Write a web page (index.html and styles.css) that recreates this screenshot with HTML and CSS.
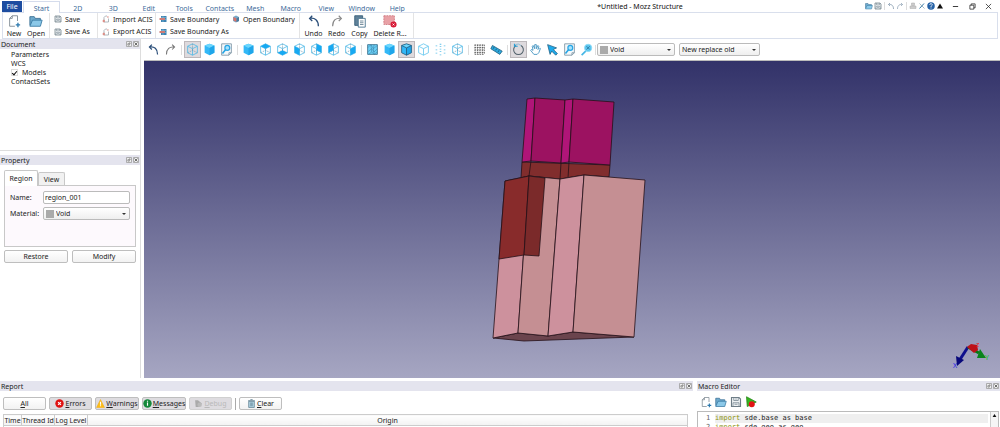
FILE: index.html
```html
<!DOCTYPE html>
<html lang="en">
<head>
<meta charset="utf-8">
<title>*Untitled - Mozz Structure</title>
<link rel="stylesheet" href="styles.css">
</head>
<body>
<svg class="defs" aria-hidden="true">
  <defs>
    <symbol id="undo" viewBox="0 0 16 16"><path d="M6 2 3 5l3 3M3 5c6-1 10 2 10 9" fill="none" stroke="currentColor" stroke-width="1.5"/></symbol>
    <symbol id="redo" viewBox="0 0 16 16"><path d="m10 2 3 3-3 3M13 5C7 4 3 7 3 14" fill="none" stroke="currentColor" stroke-width="1.3"/></symbol>
    <symbol id="cube" viewBox="0 0 16 16"><path d="m8 1 6 2v9l-6 3-6-3V3z" fill="#33b8f7"/><path d="m8 1 6 2-6 3-6-3z" fill="#6bd6fd"/><path d="m8 6 6-3v9l-6 3z" fill="#1fa6ea"/></symbol>
    <symbol id="cube-edges" viewBox="0 0 16 16"><use href="#cube"/><path d="m8 1 6 2v9l-6 3-6-3V3zM2 3l6 3 6-3M8 6v9" fill="none" stroke="#245a7c"/></symbol>
    <symbol id="frame" viewBox="0 0 16 16"><path d="m8 1 6 3v8l-6 3-6-3V4zM2 4l6 3 6-3M8 7v8" fill="none" stroke="#50b9e6"/><path d="M8 1v8M2 12l6-3 6 3" fill="none" stroke="#6b98ae" stroke-width=".8" stroke-dasharray="2 1"/></symbol>
    <symbol id="hollow" viewBox="0 0 16 16"><path d="m8 1 6 3v8l-6 3-6-3V4zM2 4l6 3 6-3M8 7v8" fill="none" stroke="#63c5ee"/></symbol>
    <symbol id="face-top" viewBox="0 0 16 16"><use href="#frame"/><path d="m8 1 6 3-6 3-6-3z" fill="#17a9f2"/></symbol>
    <symbol id="face-bottom" viewBox="0 0 16 16"><use href="#frame"/><path d="m8 9 6 3-6 3-6-3z" fill="#17a9f2"/></symbol>
    <symbol id="face-left" viewBox="0 0 16 16"><use href="#frame"/><path d="m2 4 6 3v8l-6-3z" fill="#17a9f2"/></symbol>
    <symbol id="face-right" viewBox="0 0 16 16"><use href="#frame"/><path d="m8 7 6-3v8l-6 3z" fill="#17a9f2"/></symbol>
    <symbol id="face-back" viewBox="0 0 16 16"><use href="#frame"/><path d="m8 1 6 3v8L8 9z" fill="#17a9f2"/></symbol>
    <symbol id="face-rear" viewBox="0 0 16 16"><use href="#frame"/><path d="m8 1-6 3v8l6-3z" fill="#17a9f2"/></symbol>
    <symbol id="points" viewBox="0 0 16 16"><path d="M2 3h2v1H2zm5-2h2v1H7zm5 2h2v1h-2zM2 8h2v1H2zm5-1h2v1H7zm5 1h2v1h-2zM2 12h2v1H2zm5 2h2v1H7zm5-2h2v1h-2zM7 10h2v1H7zM7 4h2v1H7z" fill="#58bfe9"/></symbol>
    <symbol id="page-zoom" viewBox="0 0 16 16"><path d="M2 1h12v11l-3 3H2z" fill="#f4f8fa" stroke="#7890a0"/><path d="M14 12h-3v3" fill="none" stroke="#7890a0"/><circle cx="9" cy="6" r="3" fill="#a6e2fb" stroke="#26a5e5" stroke-width="1.5"/><path d="m7 8-4 5" stroke="#26a5e5" stroke-width="2"/></symbol>
    <symbol id="zoom-fit" viewBox="0 0 16 16"><circle cx="10" cy="6" r="4.5" fill="#5ac5ee" stroke="#8edbf7"/><path d="m8 4 4 4m0-4L8 8" stroke="#28749b"/><path d="m7 10-5 5" stroke="#45b6e5" stroke-width="2"/></symbol>
    <symbol id="mesh" viewBox="0 0 16 16"><path d="M2 2h12v12H2z" fill="#6bd0f7" stroke="#386b88"/><path d="m2 6 4-4 3 5 5-4M2 11l5-4 3 4 4-4M3 14l4-3 3 3 4-3M6 2l1 9m3-9-1 5 1 7" fill="none" stroke="#397a9d" stroke-width=".6"/></symbol>
    <symbol id="grid" viewBox="0 0 16 16"><path d="M2 2.500h12M2 5.500h12M2 8.500h12M2 11.500h12M2 14h12M2.500 2v12M5.500 2v12M8.500 2v12M11.500 2v12M14 2v12" stroke="#555" stroke-width="1" stroke-dasharray="2 1"/></symbol>
    <symbol id="ruler" viewBox="0 0 16 16"><path d="m3 3 12 7-3 4L1 7z" fill="#2ba9df" stroke="#246180"/><path d="m5 5-1 2m4 0L7 9m4 0-1 2" stroke="#195371"/></symbol>
    <symbol id="rotate" viewBox="0 0 16 16"><path d="M5 3a6 6 0 1 0 6 0" fill="none" stroke="#54636d" stroke-width="1.3"/><path d="M4 2q4-2 7 1" fill="none" stroke="#7eb9d5"/><path d="M3 1v3h4" fill="none" stroke="#20a1da" stroke-width="1.300"/></symbol>
    <symbol id="hand" viewBox="0 0 16 16"><path d="M6 14 2 9l1-1 2 1-1-5 1-1 2 4V2h2v5l2-4 1 1-1 4 2-2 1 1-2 5-2 2z" fill="#fff" stroke="#348bbb"/></symbol>
    <symbol id="pointer" viewBox="0 0 16 16"><path d="m2 2 11 4-4 2 5 5-2 2-5-5-2 4z" fill="#1daaec" stroke="#266588"/></symbol>
    <symbol id="new" viewBox="0 0 16 16"><path d="M12 8V2H6L3 5v9h6M6 2v3H3" fill="none" stroke="#7b8790"/><path d="M10 12.500h5M12.500 10v5" stroke="#2b79ae" stroke-width="1.500"/></symbol>
    <symbol id="folder" viewBox="0 0 16 16"><path d="M1 13V3h5l1 2h6v3" fill="#6eaacd" stroke="#386e94"/><path d="m1 14 3-7h11l-2 7z" fill="#8bc8e8" stroke="#397aa3"/></symbol>
    <symbol id="disk" viewBox="0 0 16 16"><path d="M2 2h10l2 2v10H2z" fill="#eef2f4" stroke="#6e7d87" stroke-width="1.500"/><path d="M5 2v4h6V2M4 14V9h8v5M6 11h4M8 3v2" fill="none" stroke="#73838e"/></symbol>
    <symbol id="acis" viewBox="0 0 16 16"><path d="M10 2H7L4 5v9h9V7" fill="none" stroke="#87939b" stroke-width="1.300"/><path d="m11 2 2 2-2 2M2 10h3v4H2z" fill="#e5958d" stroke="#d7867e"/></symbol>
    <symbol id="boundary" viewBox="0 0 16 16"><path d="M4 2h11v12H4z" fill="#3d83b2"/><path d="M4 5h11M4 9h11M8 2v12" stroke="#9ac8de"/><path d="M1 6h11v4H1z" fill="#cf7c77"/></symbol>
    <symbol id="open-boundary" viewBox="0 0 16 16"><path d="m8 1 6 3v8l-6 3-6-3V4z" fill="#75a9c9"/><path d="m3 4 6 3v7l-6-3z" fill="#db7168"/><path d="m9 7 5-3v8l-5 2z" fill="#487b9e"/></symbol>
    <symbol id="copy" viewBox="0 0 16 16"><path d="M2 2h9v11H2z" fill="#61829a" stroke="#345b77"/><path d="M6 5h8v10H6z" fill="#fff" stroke="#46718d"/><path d="M8 8h4M8 10h4M8 12h4" stroke="#658091"/></symbol>
    <symbol id="delete" viewBox="0 0 16 16"><path d="M1 2h12v10H1z" fill="#e8a1a6" stroke="#cf777f" stroke-dasharray="2 1"/><circle cx="12" cy="12" r="3.500" fill="#d71935"/><path d="m11 11 2 2m0-2-2 2" stroke="#fff"/></symbol>
    <symbol id="float" viewBox="0 0 8 8"><rect x=".5" y=".5" width="7" height="7" rx="1" fill="#eee" stroke="#888"/><path d="M2.500 5.500v-2h2v2zM4 2.500h1.500V4" fill="none" stroke="#555" stroke-width=".7"/></symbol>
    <symbol id="close" viewBox="0 0 8 8"><rect x=".5" y=".5" width="7" height="7" rx="1" fill="#eee" stroke="#888"/><path d="m2 2 4 4m0-4L2 6" stroke="#444"/></symbol>
    <symbol id="error" viewBox="0 0 16 16"><circle cx="8" cy="8" r="7.500" fill="#df1212"/><path d="m5.500 5.500 5 5m0-5-5 5" stroke="#fff" stroke-width="2"/></symbol>
    <symbol id="warning" viewBox="0 0 16 16"><path d="m8 1 7 14H1z" fill="#fdbd15" stroke="#f3ab13"/><path d="M8 5v5m0 1v2" stroke="#fff" stroke-width="2"/></symbol>
    <symbol id="message" viewBox="0 0 16 16"><circle cx="8" cy="8" r="7.500" fill="#15893b"/><path d="M8 3v2m0 1v6" stroke="#fff" stroke-width="2"/></symbol>
    <symbol id="debug" viewBox="0 0 16 16"><path d="M2 2h5l7 6-6 6H3z" fill="#aaa"/><circle cx="10" cy="10" r="4" fill="#bbb"/></symbol>
    <symbol id="trash" viewBox="0 0 16 16"><path d="M3 4h10v11H3zM2 3h12M6 1h4" fill="#b9dcea" stroke="#57788b" stroke-width="1.300"/><path d="M6 6v7m2-7v7m2-7v7" stroke="#57788b"/></symbol>
    <symbol id="run" viewBox="0 0 16 16"><path d="m2 1 13 7-12 6z" fill="#35b51e" stroke="#238316"/><circle cx="9" cy="11" r="4" fill="#e21414"/></symbol>
    <symbol id="printer" viewBox="0 0 16 16"><path d="M5 2h6v5H5zM2 8h12v5H2z" fill="#ccc" stroke="#aaa"/></symbol>
    <symbol id="tools" viewBox="0 0 16 16"><path d="m3 13 9-10" stroke="#397ca8" stroke-width="2"/><path d="m3 3 10 10" stroke="#8aa2af" stroke-width="1.500"/></symbol>
    <symbol id="help" viewBox="0 0 16 16"><circle cx="8" cy="8" r="7.500" fill="#2561a6"/><path d="M5.500 6c0-4 5-3 5-.5C10.500 7.500 8 7 8 10m0 1v2" fill="none" stroke="#fff" stroke-width="1.700"/></symbol>
    <symbol id="up" viewBox="0 0 16 16"><path d="m8 3 6 10H2z" fill="#111"/></symbol>
    <symbol id="minimize" viewBox="0 0 16 16"><path d="M2 8h12" stroke="#222" stroke-width="2"/></symbol>
    <symbol id="restore" viewBox="0 0 16 16"><path d="M2 5h9v9H2zM5 5V2h9v9h-3" fill="none" stroke="#222" stroke-width="1.700"/></symbol>
    <symbol id="exit" viewBox="0 0 16 16"><path d="m2 2 12 12m0-12L2 14" stroke="#222" stroke-width="1.700"/></symbol>
    <linearGradient id="sky" x1="0" y1="0" x2="0" y2="1"><stop offset="0" stop-color="#323269"/><stop offset="1" stop-color="#a6a6c2"/></linearGradient>
  </defs>
</svg>

<header class="titlebar">
  <nav class="tabs">
    <button class="file">File</button>
    <button class="start">Start</button>
    <div class="tab-list">
      <button>2D</button><button>3D</button><button>Edit</button><button>Tools</button><button>Contacts</button><button>Mesh</button><button>Macro</button><button>View</button><button>Window</button><button>Help</button>
    </div>
  </nav>
  <h1 class="title">*Untitled - Mozz Structure</h1>
  <div class="quick">
    <button aria-label="Open"><svg><use href="#folder"/></svg></button>
    <button aria-label="Save"><svg><use href="#disk"/></svg></button>
    <i></i>
    <button aria-label="Undo" class="faded"><svg><use href="#undo"/></svg></button>
    <button aria-label="Redo" class="faded"><svg><use href="#redo"/></svg></button>
    <i></i>
    <button aria-label="Print"><svg><use href="#printer"/></svg></button>
    <button aria-label="Options"><svg><use href="#tools"/></svg></button>
    <button aria-label="Help"><svg><use href="#help"/></svg></button>
    <button aria-label="Collapse ribbon"><svg><use href="#up"/></svg></button>
    <div class="window-buttons">
      <button aria-label="Minimize"><svg><use href="#minimize"/></svg></button>
      <button aria-label="Restore window"><svg><use href="#restore"/></svg></button>
      <button aria-label="Close window"><svg><use href="#exit"/></svg></button>
    </div>
  </div>
</header>

<section class="ribbon">
  <div class="group large g-file">
    <button><svg><use href="#new"/></svg>New</button>
    <button><svg><use href="#folder"/></svg>Open</button>
  </div>
  <div class="group small g-save">
    <button><svg><use href="#disk"/></svg>Save</button>
    <button><svg><use href="#disk"/></svg>Save As</button>
  </div>
  <div class="group small g-acis">
    <button><svg><use href="#acis"/></svg>Import ACIS</button>
    <button><svg><use href="#acis"/></svg>Export ACIS</button>
  </div>
  <div class="group small g-boundary">
    <button><svg><use href="#boundary"/></svg>Save Boundary</button>
    <button><svg><use href="#boundary"/></svg>Save Boundary As</button>
    <button><svg><use href="#open-boundary"/></svg>Open Boundary</button>
  </div>
  <div class="group large g-edit">
    <button class="navy"><svg><use href="#undo"/></svg>Undo</button>
    <button class="gray"><svg><use href="#redo"/></svg>Redo</button>
    <button><svg><use href="#copy"/></svg>Copy</button>
    <button class="wide"><svg><use href="#delete"/></svg>Delete R...</button>
  </div>
</section>

<div class="workspace">
  <aside class="left">
    <header class="dock-title"><h2>Document</h2><button aria-label="Float document"><svg><use href="#float"/></svg></button><button aria-label="Close document"><svg><use href="#close"/></svg></button></header>
    <ul class="tree">
      <li>Parameters</li>
      <li>WCS</li>
      <li><label><input type="checkbox" checked>Models</label></li>
      <li>ContactSets</li>
    </ul>
    <header class="dock-title"><h2>Property</h2><button aria-label="Float property"><svg><use href="#float"/></svg></button><button aria-label="Close property"><svg><use href="#close"/></svg></button></header>
    <div class="property">
      <div class="prop-tabs"><button class="active">Region</button><button>View</button></div>
      <div class="prop-panel">
        <label for="name">Name:</label><input id="name" type="text" value="region_001">
        <label for="material">Material:</label>
        <div class="combo swatched"><select id="material"><option>Void</option></select></div>
      </div>
      <div class="prop-actions"><button class="push">Restore</button><button class="push">Modify</button></div>
    </div>
  </aside>

  <main class="center">
    <div class="toolbar">
      <button aria-label="Undo" class="navy"><svg><use href="#undo"/></svg></button>
      <button aria-label="Redo" class="gray"><svg><use href="#redo"/></svg></button>
      <i></i>
      <button aria-label="Perspective" class="on"><svg><use href="#frame"/></svg></button>
      <button aria-label="Solid"><svg><use href="#cube"/></svg></button>
      <button aria-label="Zoom page"><svg><use href="#page-zoom"/></svg></button>
      <i></i>
      <button aria-label="Isometric"><svg><use href="#cube"/></svg></button>
      <button aria-label="Top"><svg><use href="#face-top"/></svg></button>
      <button aria-label="Bottom"><svg><use href="#face-bottom"/></svg></button>
      <button aria-label="Left"><svg><use href="#face-left"/></svg></button>
      <button aria-label="Back"><svg><use href="#face-back"/></svg></button>
      <button aria-label="Rear"><svg><use href="#face-rear"/></svg></button>
      <button aria-label="Right"><svg><use href="#face-right"/></svg></button>
      <i></i>
      <button aria-label="Mesh"><svg><use href="#mesh"/></svg></button>
      <button aria-label="Shaded"><svg><use href="#cube"/></svg></button>
      <button aria-label="Shaded with edges" class="on"><svg><use href="#cube-edges"/></svg></button>
      <button aria-label="Hidden line"><svg><use href="#hollow"/></svg></button>
      <button aria-label="Points"><svg><use href="#points"/></svg></button>
      <button aria-label="Wireframe"><svg><use href="#frame"/></svg></button>
      <i></i>
      <button aria-label="Grid"><svg><use href="#grid"/></svg></button>
      <button aria-label="Measure"><svg><use href="#ruler"/></svg></button>
      <i></i>
      <button aria-label="Rotate" class="on"><svg><use href="#rotate"/></svg></button>
      <button aria-label="Pan"><svg><use href="#hand"/></svg></button>
      <button aria-label="Select"><svg><use href="#pointer"/></svg></button>
      <button aria-label="Zoom window"><svg><use href="#page-zoom"/></svg></button>
      <button aria-label="Fit"><svg><use href="#zoom-fit"/></svg></button>
      <i></i>
      <div class="combo swatched t-combo"><select aria-label="Material"><option>Void</option></select></div>
      <div class="combo t-combo wide"><select aria-label="Overlap mode"><option>New replace old</option></select></div>
    </div>
    <svg class="viewport" viewBox="144 61 856 317" preserveAspectRatio="xMidYMid slice" role="img" aria-label="3D model">
      <rect x="144" y="61" width="856" height="317" fill="url(#sky)"/>
      <g stroke="#251018" stroke-width=".8" stroke-linejoin="round">
        <path d="M522 162 521 178l8-2 31 3 24-4 25 2 1-12z" fill="#812d2d"/>
        <path d="m527 99 8-1-4 63-9 1z" fill="#b01578"/>
        <path d="m535 98 30 2-4 63-30-2z" fill="#9c1261"/>
        <path d="m565 100 8-1-4 63-8 1z" fill="#b01578"/>
        <path d="m573 99 41 3-4 63-41-3z" fill="#9c1261"/>
        <path d="m531 161-2 15m32-13-1 16m9-17-1 16" fill="none"/>
        <path d="m493 338 25-5 30 3 25-4 61 5-110 4z" fill="#6b444d"/>
        <path d="m505 181 24-5-11 157-25 5z" fill="#cd919d"/>
        <path d="m529 176 31 3-12 157-30-3z" fill="#c58f93"/>
        <path d="m560 179 24-4-11 157-25 4z" fill="#cd919d"/>
        <path d="m584 175 61 5-11 157-61-5z" fill="#c58f93"/>
        <path d="m505 181 24-5-5 79-25 4z" fill="#882b2b"/>
        <path d="m529 176 16 2-6 78-15-1z" fill="#7b2a2a"/>
      </g>
      <path d="m968 347-9 14" stroke="#10108d" stroke-width="3"/><path d="m956 356 8 4-7 6z" fill="#08087a"/>
      <path d="m968 347 11 6" stroke="#087813" stroke-width="3"/><path d="m980 349 6 9-9 0z" fill="#09841b"/>
      <path d="m967 347 4-3 6 1 1 5-4 3z" fill="#bd1118"/>
      <text x="953" y="368" class="axis x">X</text><text x="985" y="360" class="axis y">Y</text><text x="976" y="347" class="axis z">z</text>
    </svg>
  </main>
</div>

<div class="bottom">
  <section class="report">
    <header class="dock-title"><h2>Report</h2><button aria-label="Float report"><svg><use href="#float"/></svg></button><button aria-label="Close report"><svg><use href="#close"/></svg></button></header>
    <div class="filters">
      <button class="push"><span><u>A</u>ll</span></button>
      <button class="push down"><svg><use href="#error"/></svg><span><u>E</u>rrors</span></button>
      <button class="push down long"><svg><use href="#warning"/></svg><span><u>W</u>arnings</span></button>
      <button class="push down long"><svg><use href="#message"/></svg><span><u>M</u>essages</span></button>
      <button class="push down" disabled><svg><use href="#debug"/></svg><span><u>D</u>ebug</span></button>
      <i></i>
      <button class="push"><svg><use href="#trash"/></svg><span><u>C</u>lear</span></button>
    </div>
    <table class="log">
      <thead><tr><th class="c-time">Time</th><th class="c-thread">Thread Id</th><th class="c-level">Log Level</th><th>Origin</th></tr></thead>
      <tbody><tr><td colspan="4"></td></tr></tbody>
    </table>
  </section>
  <section class="macro">
    <header class="dock-title"><h2>Macro Editor</h2><button aria-label="Float macro editor"><svg><use href="#float"/></svg></button><button aria-label="Close macro editor"><svg><use href="#close"/></svg></button></header>
    <div class="macro-tools">
      <button aria-label="New macro"><svg><use href="#new"/></svg></button>
      <button aria-label="Open macro"><svg><use href="#folder"/></svg></button>
      <button aria-label="Save macro"><svg><use href="#disk"/></svg></button>
      <button aria-label="Run macro"><svg><use href="#run"/></svg></button>
    </div>
    <div class="editor">
      <ol class="code">
        <li class="current"><code><b>import</b> sde.base as base</code></li>
        <li><code><b>import</b> sde.geo as geo</code></li>
      </ol>
      <div class="scrollbar"><svg><use href="#up"/></svg></div>
    </div>
  </section>
</div>
</body>
</html>
```
FILE: styles.css
```css
* { box-sizing: border-box; }

body {
  margin: 0;
  height: 100vh;
  overflow: hidden;
  display: flex;
  flex-direction: column;
  background: #fff;
  color: #222;
  font: 7px/9px "Noto Sans", "Open Sans", sans-serif;
}

button, input, select { font: inherit; color: inherit; margin: 0; }
button { padding: 0; border: 0; background: none; }
svg { display: block; flex: none; }
.defs { position: absolute; width: 0; height: 0; }
h1, h2 { margin: 0; font: inherit; }
.navy { color: #294d78; }
.gray { color: #777; }
.ribbon .navy, .ribbon .gray { color: #222; }
.ribbon .navy svg { color: #294d78; }
.ribbon .gray svg { color: #888; }

/* Title bar and ribbon */
.titlebar { display: flex; height: 12px; flex: none; align-items: stretch; }
.tabs { display: flex; padding: 1px 0 0 2px; color: #3d6b9a; }
.tabs button { padding-top: 4px; line-height: 8px; }
.tabs .file { width: 20px; padding: 0; margin-right: 1px; background: #1d4da0; color: #fff; }
.tabs .start { position: relative; z-index: 1; width: 37px; height: 12px; border: 1px solid #d5dcec; border-bottom: 0; background: #fff; padding-top: 3px; }
.tab-list { display: flex; width: 355px; }
.tab-list button { flex: 1; }
.title { flex: 1; padding-top: 2px; text-align: center; color: #111; }
.quick { display: flex; width: 135px; align-items: center; }
.quick button { width: 9px; }
.quick svg { width: 8px; height: 8px; }
.quick i { width: 1px; height: 8px; margin: 0 2px 0 1px; background: #ddd; }
.faded { color: #7c93a8; }
.window-buttons { display: flex; flex: 1; justify-content: space-between; padding: 0 6px 0 7px; }
.window-buttons svg { width: 7px; height: 7px; }

.ribbon { display: flex; flex: none; height: 27px; margin: 0 2px; border: 1px solid #d9dfec; }
.group { border-right: 1px solid #e4e4e4; }
.large { display: flex; }
.large button { display: flex; flex-direction: column; align-items: center; justify-content: space-between; width: 23px; padding: 1px 0 0; white-space: nowrap; }
.large svg { width: 14px; height: 14px; }
.small { display: grid; grid-template-rows: 12px 13px; grid-auto-flow: column; justify-content: start; padding-left: 4px; }
.small button { display: flex; align-items: center; gap: 3px; text-align: left; white-space: nowrap; }
.small svg { width: 8px; height: 8px; }
.g-file { width: 47px; }
.g-file button { width: 22px; }
.g-save { width: 48px; }
.g-acis { width: 58px; }
.g-boundary { width: 144px; column-gap: 3px; padding-left: 3px; }
.g-edit { width: 114px; padding-left: 2px; }
.g-edit .wide { width: 38px; }

/* Docks */
.workspace { display: flex; flex: 1; min-height: 0; }
.left { display: flex; flex-direction: column; width: 141px; margin-right: 3px; flex: none; border-right: 1px solid #ddd; }
.dock-title { display: flex; flex: none; align-items: center; gap: 1px; height: 10px; padding: 0 1px; background: #e4e4ee; }
.dock-title h2 { flex: 1; }
.dock-title svg { width: 6px; height: 6px; }
.tree { flex: none; height: 102px; margin: 0 0 4px; padding: 1px 11px; list-style: none; border-bottom: 1px solid #ddd; }
.tree label { display: flex; align-items: center; gap: 4px; }
.tree input { appearance: none; width: 7px; height: 7px; border: 1px solid #ddd; background: #fff; display: grid; place-items: start center; }
.tree input:checked::after { content: ""; box-sizing: border-box; width: 3px; height: 5px; border: solid #111; border-width: 0 1px 1px 0; transform: rotate(40deg); }

.property { padding: 5px 4px 0; }
.prop-tabs { display: flex; align-items: flex-end; }
.prop-tabs button { width: 27px; height: 13px; border: 1px solid #c8c8c8; border-bottom: 0; border-radius: 2px 2px 0 0; background: #f1f1f1; }
.prop-tabs .active { position: relative; z-index: 1; width: 34px; height: 16px; margin-bottom: -1px; padding-bottom: 1px; background: #fff; }
.prop-panel { display: grid; grid-template-columns: 33px 1fr; grid-auto-rows: 13px; row-gap: 3px; align-items: center; min-height: 62px; padding: 5px; border: 1px solid #c8c8c8; background: #fdf9fd; }
.prop-panel input { width: 100%; height: 13px; padding: 0 1px; border: 1px solid #bbb; border-radius: 2px; background: #fff; }
.prop-actions { display: grid; grid-template-columns: 1fr 1fr; gap: 4px; margin-top: 3px; }
.push { display: flex; align-items: center; justify-content: center; gap: 1px; height: 13px; border: 1px solid #bebebe; border-radius: 2px; background: linear-gradient(#fff, #f2f2f2); }
.push svg { width: 9px; height: 9px; }
.down { background: #dedce0; }
.push:disabled { color: #b9b9b9; border-color: #d0d0d0; }

.combo { position: relative; height: 13px; }
.combo select { appearance: none; display: block; width: 100%; height: 13px; padding: 0 10px 0 2px; border: 1px solid #bbb; border-radius: 2px; background: linear-gradient(#fff, #efefef); }
.combo::after { content: ""; position: absolute; right: 4px; top: 6px; border: 2px solid transparent; border-top-color: #333; pointer-events: none; }
.combo.swatched select { padding-left: 12px; }
.swatched::before { content: ""; position: absolute; left: 3px; top: 3px; width: 8px; height: 8px; background: #aaa; pointer-events: none; }

/* View toolbar and 3D canvas */
.center { display: flex; flex-direction: column; flex: 1; min-width: 0; }
.toolbar { display: flex; flex: none; align-items: center; height: 22px; padding-left: 1px; border-bottom: 1px solid #bbb; }
.toolbar button { display: grid; place-items: center; width: 17px; height: 17px; border: 1px solid transparent; }
.toolbar .on { border-color: #bdb8bb; background: #dedadd; }
.toolbar svg { width: 13px; height: 13px; }
.toolbar i { width: 1px; height: 10px; margin: 0 2px; background: #ddd; }
.toolbar i:nth-last-of-type(1) { margin: 0 1px 0 0; }
.t-combo { width: 78px; }
.t-combo.wide { width: 81px; margin-left: 4px; }
.viewport { flex: 1; width: 100%; min-height: 0; }
.axis { font-size: 7px; }
.x { fill: #1a1ae6; }
.y { fill: #16c629; }
.z { fill: #e31d25; }

/* Bottom docks */
.bottom { display: flex; flex: none; gap: 4px; height: 46px; margin-top: 3px; overflow: hidden; }
.report { flex: 1; min-width: 0; }
.macro { width: 303px; flex: none; }
.filters { display: flex; align-items: center; gap: 3px; padding: 6px 3px 4px; }
.filters button { width: 43px; }
.filters .long { width: 44px; }
.filters i { width: 1px; height: 12px; background: #aaa; }
.log { width: calc(100% - 8px); margin-left: 3px; border-collapse: collapse; table-layout: fixed; border: 1px solid #ccc; }
.log th { height: 11px; padding: 0; font-weight: normal; white-space: nowrap; border: 1px solid #ccc; background: linear-gradient(#fff, #f2f2f2); }
.log td { height: 20px; padding: 0; }
.c-time { width: 18px; }
.c-thread { width: 33px; }
.c-level { width: 33px; }
.macro-tools { display: flex; gap: 3px; padding: 5px 3px 3px; }
.macro-tools button { width: 12px; }
.macro-tools svg { width: 12px; height: 12px; }
.editor { display: flex; margin-right: 1px; height: 40px; border: 1px solid #bbb; }
.code { flex: 1; margin: 2px 2px 0 17px; padding: 0; list-style: none; counter-reset: line; font: 7px/9px "DejaVu Sans Mono", monospace; }
.code li { position: relative; counter-increment: line; }
.code li::before { content: counter(line); position: absolute; left: -9px; color: #666; }
.code code { font: inherit; }
.code b { font-weight: normal; color: #8c9410; }
.current { background: #efefef; }
.scrollbar { width: 8px; border-left: 1px solid #ccc; background: #f5f5f5; padding: 1px; }
.scrollbar svg { width: 5px; height: 5px; }
```
